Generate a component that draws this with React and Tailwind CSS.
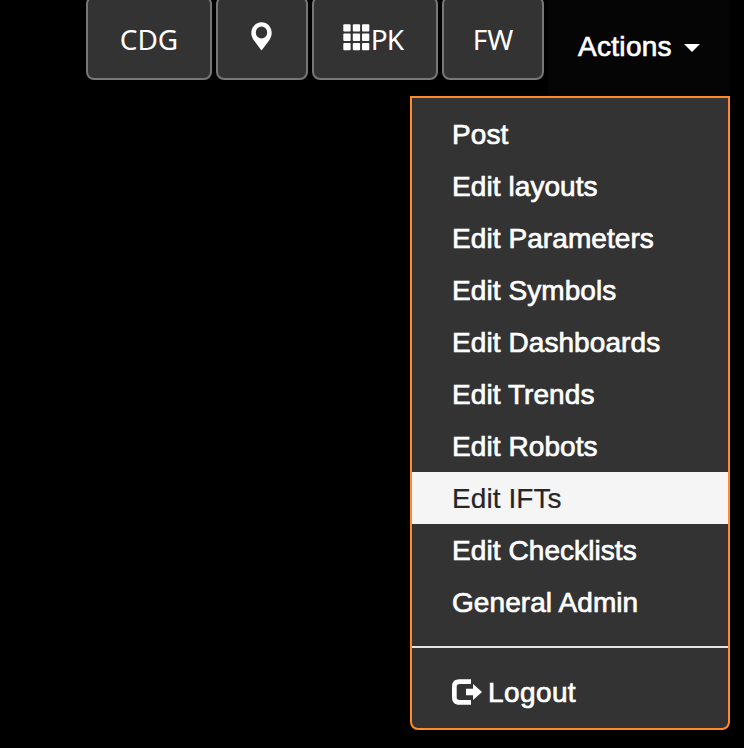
const items = [
  'Post',
  'Edit layouts',
  'Edit Parameters',
  'Edit Symbols',
  'Edit Dashboards',
  'Edit Trends',
  'Edit Robots',
  'Edit IFTs',
  'Edit Checklists',
  'General Admin',
];

const activeItem = 'Edit IFTs';

function NavButton({ className, children }) {
  return (
    <button
      className={`flex h-[84px] items-center justify-center rounded-lg border-2 border-[#777777] bg-[#333333] pt-[2px] font-['Noto_Sans',sans-serif] text-[28px] leading-[40px] text-white ${className}`}
    >
      {children}
    </button>
  );
}

function MapMarkerIcon() {
  return (
    <svg className="mb-[5px] mr-[1px] h-[29px] w-[21px]" viewBox="0 0 22 29" preserveAspectRatio="none" fill="white">
      <path
        fillRule="evenodd"
        d="M11 0.3C5 0.3 0.3 5 0.3 11C0.3 13.6 1.2 15.6 2.7 18L11 28.6L19.3 18C20.8 15.6 21.7 13.6 21.7 11C21.7 5 17 0.3 11 0.3ZM11 4.5A6 6 0 1 1 11 16.5A6 6 0 1 1 11 4.5Z"
      />
    </svg>
  );
}

function GridIcon() {
  return (
    <svg className="mb-[4px] h-[27px] w-[27px] shrink-0" viewBox="0 0 27 27" fill="white">
      {[0.3, 9.6, 18.9].map((y) =>
        [0.3, 9.8, 19].map((x) => (
          <rect key={`${x}-${y}`} x={x} y={y} width="7.3" height="7.3" rx="1" />
        )),
      )}
    </svg>
  );
}

function LogoutIcon() {
  return (
    <svg className="mr-[6px] h-[26px] w-[30px] shrink-0" viewBox="0 0 30 26" fill="white">
      <path d="M19 0.2H7.5C2.5 0.2 0 3 0 7.5V18.5C0 23 2.5 25.8 7.5 25.8H19V21H7.8C5.6 21 4.7 20 4.7 18.2V7.8C4.7 6 5.6 5 7.8 5H19Z" />
      <path d="M14 9.8H21V5L30 13L21 21V16.2H14Z" />
    </svg>
  );
}

export default function App() {
  return (
    <div className="flex h-[748px] w-[744px] flex-col overflow-hidden bg-black font-['Liberation_Sans',Arial,sans-serif] text-[28px] text-white">
      <header className="flex h-24 shrink-0 items-start justify-end pr-[14px]">
        <nav className="-mt-1 mr-1 flex gap-1">
          <NavButton className="w-[126px]">CDG</NavButton>
          <NavButton className="w-[92px]">
            <MapMarkerIcon />
          </NavButton>
          <NavButton className="w-[126px] pr-[4px]">
            <GridIcon />
            <span className="ml-[1px] tracking-[-1px]">PK</span>
          </NavButton>
          <NavButton className="w-[102px]">FW</NavButton>
        </nav>
        <button className="flex h-24 w-[182px] items-center bg-[#050505] pb-[3px] pl-[30px]">
          <span className="w-[94px] whitespace-nowrap text-left tracking-[0.3px] [-webkit-text-stroke:0.7px_white]">
            Actions
          </span>
          <span className="ml-3 mt-[3px] border-x-8 border-t-8 border-x-transparent border-t-white" />
        </button>
      </header>
      <div className="mr-[14px] h-[634px] w-80 self-end rounded-b-lg border-2 border-[#ff8c28] bg-[#333333] py-[10px]">
        <ul>
          {items.map((item) => (
            <li
              key={item}
              className={`h-[52px] whitespace-nowrap pl-10 leading-[53px] ${
                item === activeItem
                  ? 'bg-[#f5f5f5] text-[#262626] [-webkit-text-stroke:0.2px_#262626]'
                  : '[-webkit-text-stroke:0.7px_white]'
              }`}
            >
              <span className="tracking-[0.08px]">{item}</span>
            </li>
          ))}
        </ul>
        <div className="my-[18px] h-[2px] bg-[#e5e5e5]" />
        <div className="flex h-[52px] items-center pl-10 leading-[52px]">
          <LogoutIcon />
          <span className="pt-[1px] tracking-[0.4px] [-webkit-text-stroke:0.7px_white]">Logout</span>
        </div>
      </div>
    </div>
  );
}
